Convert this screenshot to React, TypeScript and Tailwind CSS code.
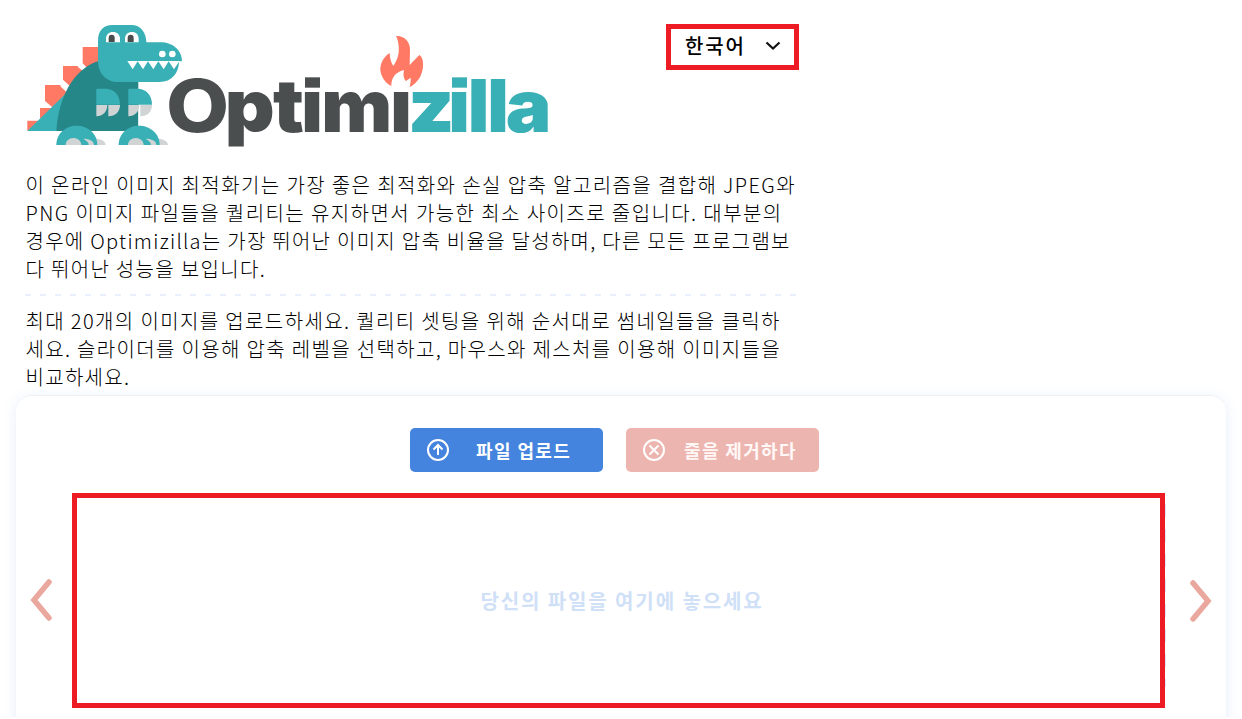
import React from "react";

type Line = { text: string; cls: string };

const intro: Line[] = [
  { text: "이 온라인 이미지 최적화기는 가장 좋은 최적화와 손실 압축 알고리즘을 결합해 JPEG와", cls: "tracking-[1.4px]" },
  { text: "PNG 이미지 파일들을 퀄리티는 유지하면서 가능한 최소 사이즈로 줄입니다. 대부분의", cls: "tracking-[1.42px]" },
  { text: "경우에 Optimizilla는 가장 뛰어난 이미지 압축 비율을 달성하며, 다른 모든 프로그램보", cls: "tracking-[1.28px]" },
  { text: "다 뛰어난 성능을 보입니다.", cls: "tracking-[1.32px]" },
];

const guide: Line[] = [
  { text: "최대 20개의 이미지를 업로드하세요. 퀄리티 셋팅을 위해 순서대로 썸네일들을 클릭하", cls: "tracking-[1.38px]" },
  { text: "세요. 슬라이더를 이용해 압축 레벨을 선택하고, 마우스와 제스처를 이용해 이미지들을", cls: "tracking-[1.34px]" },
  { text: "비교하세요.", cls: "tracking-[1.3px]" },
];

function Lines({ lines }: { lines: Line[] }) {
  return (
    <p className="pl-[0.5px] text-[20px] leading-[28px] font-light text-black">
      {lines.map((l) => (
        <span key={l.text} className={`block whitespace-nowrap ${l.cls}`}>{l.text}</span>
      ))}
    </p>
  );
}

function Foot({ x }: { x: number }) {
  return (
    <g transform={`translate(${x} 0)`}>
      <path d="M100 371h15c19 0 33 8 33 19h-48z" fill="#d0d4d5" />
      <path d="M0 390c0-34 27-58 61-58s62 24 62 58z" fill="#38b0b5" />
      <path d="M28 390c0-12 10-21 24-21 12 0 23 9 23 21zM81 371c19 0 32 7 32 19H97c0-9-6-12-16-19z" fill="#d0d4d5" />
    </g>
  );
}

function Hand({ x }: { x: number }) {
  return (
    <g transform={`translate(${x} 0)`}>
      <path d="M0 221h27c27 0 44 20 44 48H0z" fill="#38b0b5" />
      <path d="M0 270h33c0 20-14 34-33 34zM36 270h35c0 20-14 34-35 34z" fill="#d0d4d5" />
    </g>
  );
}

const letters: [string, number, number, string][] = [
  ["O", 453, 1.12, "#4a4e4f"],
  ["p", 629, 1.06, "#4a4e4f"],
  ["t", 774, 1.06, "#4a4e4f"],
  ["ı", 859, 1, "#4a4e4f"],
  ["m", 919, 1.03, "#4a4e4f"],
  ["ı", 1126, 1, "#4a4e4f"],
  ["z", 1178, 1.09, "#38b0b5"],
  ["ı", 1300, 1, "#38b0b5"],
  ["l", 1358, 1, "#38b0b5"],
  ["l", 1417, 1, "#38b0b5"],
  ["a", 1472, 1.05, "#38b0b5"],
];

function Logo() {
  return (
    <svg width="545" height="145" viewBox="0 0 1635 435" aria-label="Optimizilla">
      <g fill="#ff7964">
        <path d="M37 317h40L37 348zM75 279h42l-32 31H75zM90 210h49l18 19v12l-45 36-22-19zM144 153h46l14 15-25 39-17 4-18-17zM203 96h50v62h-37l-13-13z" />
      </g>
      <path d="M37 348 160 228v120z" fill="#38b0b5" />
      <path d="M138 210 160 231M190 152 214 170" stroke="#fff" strokeWidth="8" />
      <path d="M124 348c6-100 50-185 126-210l120 58v152z" fill="#268788" />
      <Hand x={244} />
      <path d="M373 270v62" stroke="#fff" strokeWidth="5" />
      <Hand x={340} />
      <path d="M292 30h58c26 0 44 22 44 52h42c38 0 65 24 65 57h-9c0 36-22 62-58 62H310c-37 0-61-27-61-64V76c0-29 17-46 43-46z" fill="#38b0b5" />
      <g fill="#fff">
        <path d="M273 82V71c0-12 9-20 21-20s21 8 21 20v11zM330 82V71c0-12 9-20 21-20s20 8 20 20v11z" />
        <circle cx="442" cy="117" r="10" />
        <circle cx="472" cy="117" r="10" />
        <path d="M337 138h164v1h-8l-16 24-16-24-15 24-16-24-15 24-16-24-15 24-16-24-15 24z" />
      </g>
      <path d="M281 81V68q0-9 9-9t9 9v13zM338 81V68q0-9 9-9t9 9v13z" fill="#4a4d4e" />
      <Foot x={124} />
      <Foot x={311} />
      <g fontSize="219" fontWeight="900" fontFamily="Inter, sans-serif">
        {letters.map(([ch, x, s, fill]) => (
          <text key={x} fontWeight={ch === "O" ? 800 : 900} transform={`translate(${x} 351) scale(${s} 1)`} fill={fill}>{ch}</text>
        ))}
      </g>
      <path d="M870 187h45v31h-45z" fill="#4a4e4f" />
      <path d="M1311 187h45v31h-45z" fill="#38b0b5" />
      <path transform="translate(1005 45)" d="M138 18c25-1 43 17 42 42l-1 45 29-30c14 8 14 39 6 57-5 15-18 31-35 39 1-7 4-17 3-28l-14 10c-7-6-9-19-6-33-28 7-38 25-38 48-18-9-31-27-33-48-1-17 9-40 28-51 0 13 4 29 11 39 14-20 18-39 16-60-1-11-4-23-8-30z" fill="#ff7964" />
    </svg>
  );
}

function Chevron({ flip }: { flip?: boolean }) {
  return (
    <svg width="22" height="42" viewBox="0 0 22 42" fill="none" stroke="#e9a79e" strokeWidth="5.5" strokeLinecap="round">
      <path d={flip ? "M3 3 18 21 3 39" : "M19 3 4 21 19 39"} />
    </svg>
  );
}

export default function App() {
  return (
    <div className="h-[719px] w-[1242px] overflow-hidden bg-white font-['Noto_Sans_CJK_KR',sans-serif]">
      <div className="flex h-[717px] flex-col overflow-hidden">
        <header className="flex h-[171px] shrink-0 pl-[15px] pt-[15px]">
          <Logo />
          <button className="mt-[9px] ml-[106px] flex h-[46px] w-[133px] shrink-0 items-center justify-between border-[5px] border-[#ed1c24] pr-[13px] pl-[14px] text-[20px] font-medium">
            <span className="-mt-[3px] tracking-[1.8px] whitespace-nowrap">한국어</span>
            <svg className="-mt-[3px]" width="16" height="10" viewBox="0 0 16 10" fill="none" stroke="#111" strokeWidth="2.2">
              <path d="M1.5 1.5 8 7.5 14.5 1.5" />
            </svg>
          </button>
        </header>
        <section className="w-[797px] shrink-0 pl-[25px]">
          <Lines lines={intro} />
          <svg className="mt-[11px] mb-[11px] block" width="772" height="2">
            <path d="M0 1H772" stroke="#e9effb" strokeWidth="2" strokeDasharray="6 9" />
          </svg>
          <Lines lines={guide} />
        </section>
        <main className="ml-4 mt-[4px] h-[360px] w-[1210px] shrink-0 rounded-[16px] border-t border-[#eff1f5] bg-white pt-8 shadow-[0_3px_14px_rgba(68,131,222,0.14)]">
          <div className="flex gap-[23px] pl-[394px]">
            <button className="flex h-11 w-[193px] items-center rounded-[5px] bg-[#4483de] pl-4 text-[18px] font-bold text-white">
              <svg width="24" height="24" viewBox="0 0 24 24" fill="none" stroke="white" strokeWidth="2">
                <circle cx="12" cy="12" r="10" />
                <path d="M12 17V7M7.5 11.5 12 7l4.5 4.5" />
              </svg>
              <span className="ml-[26px] tracking-[1.4px] whitespace-nowrap">파일 업로드</span>
            </button>
            <button className="flex h-11 w-[193px] items-center rounded-[5px] bg-[#edb5af] pl-4 text-[18px] font-bold text-[#fff8f7]">
              <svg width="24" height="24" viewBox="0 0 24 24" fill="none" stroke="white" strokeWidth="2">
                <circle cx="12" cy="12" r="10" />
                <path d="m7.5 7.5 9 9M16.5 7.5l-9 9" />
              </svg>
              <span className="ml-[18px] tracking-[1.35px] whitespace-nowrap">줄을 제거하다</span>
            </button>
          </div>
          <div className="mt-[21px] flex h-[215px] items-center">
            <div className="mb-[2px] ml-[14px] w-[42px]"><Chevron /></div>
            <div className="flex h-[215px] w-[1093px] items-center justify-center border-[5px] border-[#ed1c24] pl-[7px] text-[20px] font-bold text-[#cfe0f7]">
              <span className="tracking-[1.9px] whitespace-nowrap">당신의 파일을 여기에 놓으세요</span>
            </div>
            <svg width="1" height="215">
              <path d="M.5 11V194" stroke="#dbe5f6" strokeDasharray="13 12" />
            </svg>
            <div className="ml-6"><Chevron flip /></div>
          </div>
        </main>
      </div>
    </div>
  );
}
